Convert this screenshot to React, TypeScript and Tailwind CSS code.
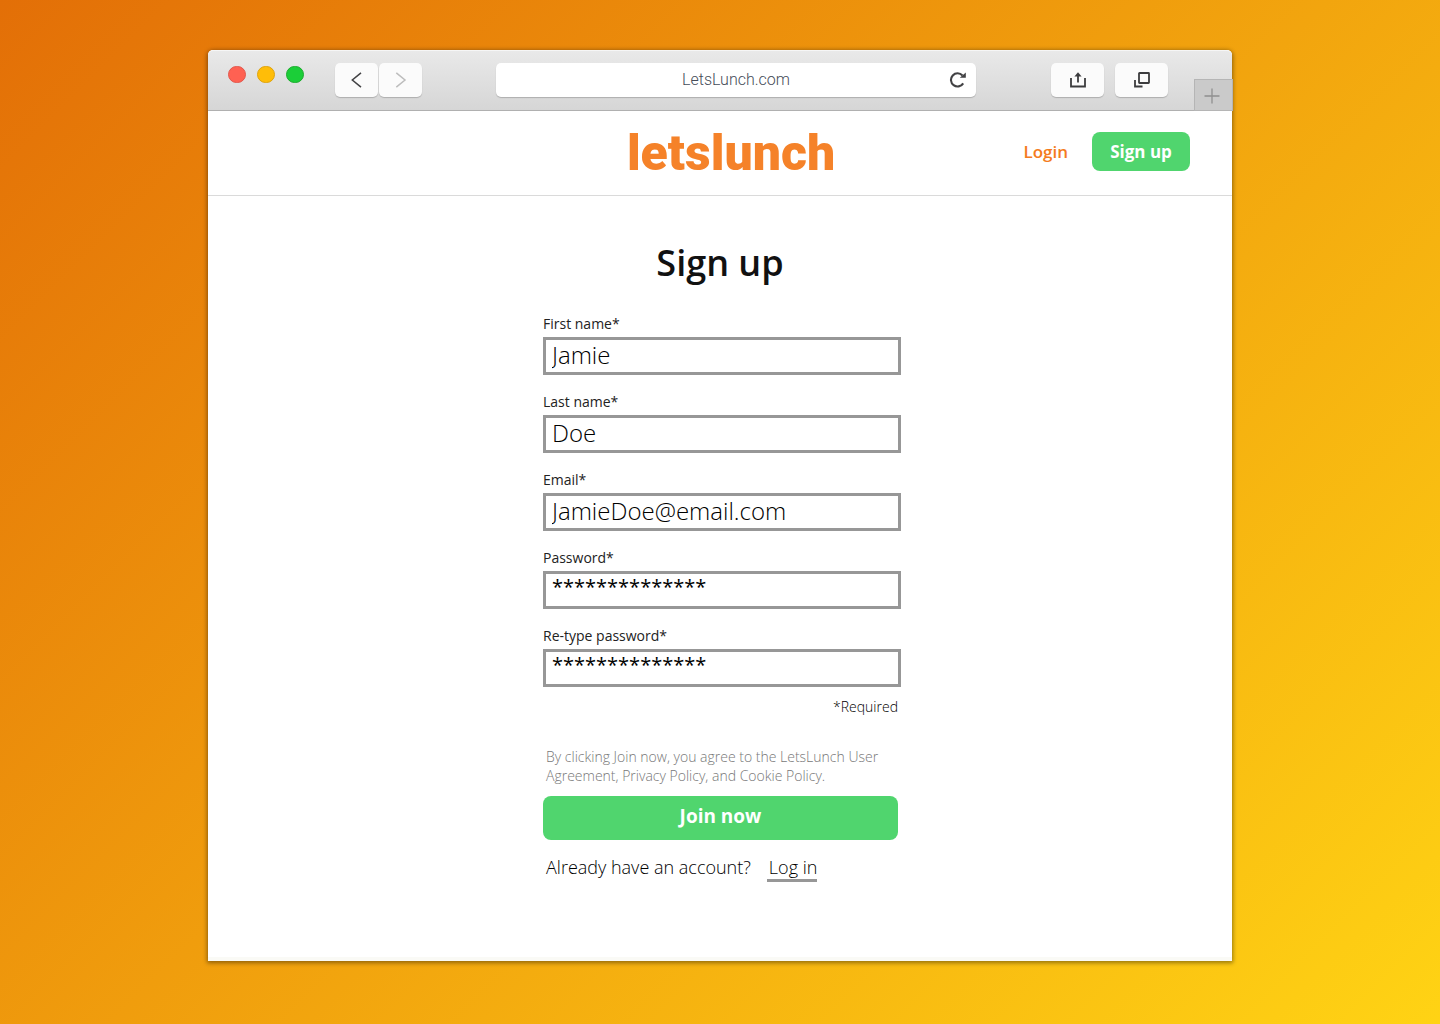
// src/App.tsx
import { useState } from 'react';
import type { FormEvent, ReactNode } from 'react';

type FieldKey = 'firstName' | 'lastName' | 'email' | 'password' | 'confirm';

const FIELDS: { key: FieldKey; label: string; masked?: boolean }[] = [
  { key: 'firstName', label: 'First name*' },
  { key: 'lastName', label: 'Last name*' },
  { key: 'email', label: 'Email*' },
  { key: 'password', label: 'Password*', masked: true },
  { key: 'confirm', label: 'Re-type password*', masked: true },
];

function ToolButton({ label, className, children }: { label: string; className: string; children: ReactNode }) {
  return (
    <button type="button" aria-label={label} className={`flex h-[34px] items-center justify-center rounded-[5px] bg-[#fbfbfb] shadow-[0_1px_1px_rgba(0,0,0,0.2)] ${className}`}>
      {children}
    </button>
  );
}

function BrowserBar() {
  return (
    <div className="flex h-[61px] items-start rounded-t-[5px] border-t border-b border-t-[#f6f6f6] border-b-[#b0b0b0] bg-linear-to-b from-[#e9e9e9] to-[#d6d6d6] pl-5">
      <div className="mt-[15px] flex gap-[11px]">
        <span className="h-[17px] w-[18px] rounded-full border border-[#e2574c] bg-[#ff6152]" />
        <span className="h-[17px] w-[18px] rounded-full border border-[#dfa30b] bg-[#ffbd08]" />
        <span className="h-[17px] w-[18px] rounded-full border border-[#1bac2c] bg-[#1bce38]" />
      </div>

      <div className="mt-3 ml-[31px] flex gap-px">
        <ToolButton label="Back" className="w-[43px]">
          <svg width="12" height="16" viewBox="0 0 12 16" fill="none" stroke="#424244" strokeWidth="1.5"><path d="M10 .8 1.300 8l8.700 7.200" /></svg>
        </ToolButton>
        <ToolButton label="Forward" className="w-[43px]">
          <svg width="12" height="16" viewBox="0 0 12 16" fill="none" stroke="#bdbdbd" strokeWidth="1.5"><path d="M1.300.8 10 8l-8.700 7.200" /></svg>
        </ToolButton>
      </div>

      <div className="mt-3 mr-[75px] ml-[74px] flex h-[34px] min-w-0 flex-1 items-center rounded-[5px] bg-white pr-[7px] pl-[31px] shadow-[0_1px_1px_rgba(0,0,0,0.2)]">
        <input aria-label="Address" defaultValue="LetsLunch.com" className="min-w-0 flex-1 bg-transparent text-center font-['Roboto',sans-serif] text-base font-light text-[#454c58] outline-none" />
        <button type="button" aria-label="Reload" className="flex h-6 w-6 items-center justify-center">
          <svg width="18" height="16" viewBox="0 0 18 16" fill="none">
            <path d="M15.200 11.400A6.600 6.600 0 1 1 14.500 3.500" stroke="#424244" strokeWidth="2.100" />
            <path d="M17.800.6v5.200h-6z" fill="#424244" />
          </svg>
        </button>
      </div>

      <div className="mt-3 mr-[26px] flex gap-[11px]">
        <ToolButton label="Share" className="w-[53px]">
          <svg width="16" height="16" viewBox="0 0 16 16" fill="none" stroke="#3c3c3e" strokeWidth="1.800">
            <path d="M1 6v8.500h14V6M8 10.500V3" />
            <path d="m8 .3 3.600 4.200H4.400z" fill="#3c3c3e" stroke="none" />
          </svg>
        </ToolButton>
        <ToolButton label="Show all tabs" className="w-[53px]">
          <svg width="16" height="16" viewBox="0 0 16 16" fill="none" stroke="#3c3c3e" strokeWidth="1.800">
            <rect x="5" y="1" width="10" height="10" rx=".5" />
            <path d="M1 8v6.500h7.500" />
          </svg>
        </ToolButton>
      </div>

      <button type="button" aria-label="New tab" className="-mr-px -mb-px flex h-8 w-[39px] items-center justify-center self-end border border-[#b5b5b5] bg-[#cacaca] pt-0.5 pr-1">
        <svg width="16" height="16" viewBox="0 0 16 16" fill="none" stroke="#8f8f8f" strokeWidth="1.300"><path d="M8 .5v15M.5 8h15" /></svg>
      </button>
    </div>
  );
}

function SiteHeader() {
  return (
    <header className="grid h-[85px] grid-cols-[1fr_auto_1fr] items-start border-b border-[#dadada] pt-[21px] pr-[42px] pl-16">
      <a href="#home" className="col-start-2 pt-px font-['Roboto',sans-serif] text-[50px] leading-10 font-black text-[#f58229]">letslunch</a>
      <nav className="flex items-center justify-end gap-6 text-[17px] font-semibold">
        <a href="#login" className="text-[#f47b20]">Login</a>
        <button type="button" className="h-[39px] w-[98px] rounded-lg bg-[#50d56e] font-bold text-white">Sign up</button>
      </nav>
    </header>
  );
}

function SignUpForm() {
  const [values, setValues] = useState<Record<FieldKey, string>>({
    firstName: 'Jamie',
    lastName: 'Doe',
    email: 'JamieDoe@email.com',
    password: '**************',
    confirm: '**************',
  });

  function onSubmit(e: FormEvent) {
    e.preventDefault();
  }

  return (
    <form onSubmit={onSubmit} className="mx-auto w-full max-w-[358px]">
      <div className="space-y-4">
        {FIELDS.map(f => (
          <div key={f.key}>
            <label htmlFor={f.key} className="block pb-0.5 text-sm leading-[22px] text-[#222222]">{f.label}</label>
            <input
              id={f.key}
              type="text"
              autoComplete="off"
              value={values[f.key]}
              onChange={e => setValues(prev => ({ ...prev, [f.key]: e.target.value }))}
              className={`block h-[38px] w-full border-3 border-[#979797] px-1.5 outline-none ${f.masked ? 'pb-2 text-xl' : 'pb-1 text-2xl font-light'}`}
            />
          </div>
        ))}
      </div>

      <div className="pr-[3px]">
        <p className="mt-2 text-right text-sm leading-6 font-light">*Required</p>
        <p className="mt-7 pl-[3px] text-sm leading-[19px] font-light text-[#777777]">
          By clicking Join now, you agree to the LetsLunch User Agreement, Privacy Policy, and Cookie Policy.
        </p>
        <button type="submit" className="mt-[11px] h-11 w-full rounded-lg bg-[#50d56e] pb-1 text-[19px] font-bold text-white">Join now</button>
        <p className="mt-[15px] flex items-start gap-4 pl-[3px] text-lg leading-6 font-light">
          Already have an account?
          <a href="#login" className="border-b-3 border-[#979797] pl-0.5">Log in</a>
        </p>
      </div>
    </form>
  );
}

export default function App() {
  return (
    <div className="min-h-screen bg-linear-[135deg] from-[#e36f07] to-[#ffd314] pt-[50px] pb-[63px] font-['Open_Sans',sans-serif] text-black">
      <div className="mx-auto w-full max-w-[1024px] rounded-t-[5px] border-b-4 border-[#fafaf6] bg-white shadow-[0_1px_4px_1px_rgba(0,0,0,0.4)]">
        <BrowserBar />
        <SiteHeader />
        <main className="pt-[43px] pb-[75px] pl-1">
          <h1 className="mb-[26px] pr-1 text-center text-4xl leading-12 font-semibold text-[#111111]">Sign up</h1>
          <SignUpForm />
        </main>
      </div>
    </div>
  );
}
